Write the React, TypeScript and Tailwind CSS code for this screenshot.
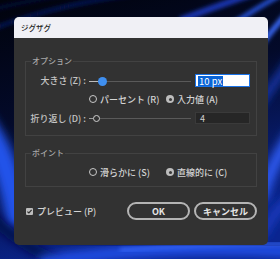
import React from "react";

function Wallpaper() {
  return (
    <svg className="absolute inset-0" width="280" height="259" viewBox="0 0 280 259">
      <defs>
        <filter id="b2" x="-20%" y="-20%" width="140%" height="140%">
          <feGaussianBlur stdDeviation="2" />
        </filter>
        <filter id="b4" x="-20%" y="-20%" width="140%" height="140%">
          <feGaussianBlur stdDeviation="5" />
        </filter>
        <linearGradient id="lg" x1="0" y1="0" x2="0.3" y2="1">
          <stop offset="0" stopColor="#01030c" />
          <stop offset="0.45" stopColor="#030a2a" />
          <stop offset="1" stopColor="#0a2590" />
        </linearGradient>
      </defs>
      <rect width="280" height="259" fill="url(#lg)" />
      <path d="M-10 30 C 40 10, 90 0, 160 -10" stroke="#0d1d6a" strokeWidth="3" fill="none" filter="url(#b2)" />
      <path d="M-10 10 C 30 0, 60 -5, 100 -12" stroke="#0b1856" strokeWidth="2" fill="none" filter="url(#b2)" />
      <path d="M180 20 C 220 5, 250 -5, 290 -20" stroke="#1c37b8" strokeWidth="6" fill="none" filter="url(#b2)" />
      <path d="M230 25 C 255 10, 270 0, 290 -10" stroke="#2b5cf0" strokeWidth="4" fill="none" filter="url(#b2)" />
      <path d="M250 60 C 265 40, 275 25, 295 5" stroke="#3a6cff" strokeWidth="5" fill="none" filter="url(#b2)" />
      <path d="M255 110 C 270 90, 280 75, 295 55" stroke="#1f44d0" strokeWidth="6" fill="none" filter="url(#b4)" />
      <path d="M260 200 C 270 170, 280 150, 295 130" stroke="#2e5cf4" strokeWidth="12" fill="none" filter="url(#b4)" />
      <path d="M262 235 C 272 215, 282 205, 295 195" stroke="#1a3cc4" strokeWidth="8" fill="none" filter="url(#b4)" />
      <path d="M-20 120 C 0 145, 10 175, 20 225" stroke="#2453ea" strokeWidth="24" fill="none" filter="url(#b4)" />
      <path d="M-10 215 C 5 230, 20 245, 60 262" stroke="#06114a" strokeWidth="10" fill="none" filter="url(#b4)" />
      <path d="M40 262 C 120 250, 200 246, 300 252" stroke="#2450e8" strokeWidth="12" fill="none" filter="url(#b4)" />
      <path d="M120 250 C 180 246, 240 244, 300 244" stroke="#3b6cff" strokeWidth="3" fill="none" filter="url(#b2)" />
    </svg>
  );
}

function Radio({ checked }: { checked?: boolean }) {
  return checked ? (
    <span className="flex h-[8px] w-[8px] shrink-0 items-center justify-center rounded-full bg-[#bdbdbd]">
      <span className="h-[3px] w-[3px] rounded-full bg-[#3a3a3a]" />
    </span>
  ) : (
    <span className="h-[8px] w-[8px] shrink-0 rounded-full border border-[#c8c8c8]" />
  );
}

function RadioRow({ a, b }: { a: string; b: string }) {
  return (
    <div className="flex items-center pl-[63px] text-[9px] font-medium leading-none text-[#d4d4d4]">
      <div className="flex w-[77px] items-center gap-[3px]">
        <Radio />
        <span>{a}</span>
      </div>
      <div className="flex items-center gap-[3px]">
        <Radio checked />
        <span>{b}</span>
      </div>
    </div>
  );
}

export default function App() {
  return (
    <div className="relative h-[259px] w-[280px] overflow-hidden pl-[14px] pt-[17px] font-['Noto_Sans_CJK_JP',sans-serif]">
      <Wallpaper />
      <div className="relative flex h-[228px] w-[254px] flex-col overflow-hidden rounded-[5px] bg-[#323232]">
        <div className="flex h-[21px] items-center bg-[#f0f0f5] pl-[7px] text-[7.5px] font-medium leading-none text-[#222]">
          ジグザグ
        </div>
        <div className="flex flex-col px-[11px] pt-[18px]">
          <fieldset className="h-[80px] border border-[#424242] px-0">
            <legend className="ml-[5px] px-[1px] text-[8px] font-medium leading-[10px] text-[#a8a8a8]">オプション</legend>
            <div className="flex flex-col pt-[8px]">
              <div className="flex h-[13px] items-center">
                <span className="w-[60px] text-right text-[9px] font-medium leading-none text-[#c4c4c4]">大きさ (Z) :</span>
                <div className="relative ml-[2px] h-[10px] w-[104px]">
                  <div className="absolute left-[1px] right-[1px] top-[5px] h-px bg-[#5a5a5a]" />
                  <div className="absolute left-[1px] top-[5px] h-px w-[10px] bg-[#bdbdbd]" />
                  <div className="absolute left-[10px] top-[1px] h-[9px] w-[9px] rounded-full bg-[#3f8ff0]" />
                </div>
                <div className="ml-[3px] flex h-[13px] w-[55px] items-center border border-[#1a73e8] bg-white pl-[2px]">
                  <span className="bg-[#0a64d6] px-[1px] text-[9.5px] leading-[10px] text-white">10 px</span>
                </div>
              </div>
              <div className="mt-[6px] flex h-[12px] items-center">
                <RadioRow a="パーセント (R)" b="入力値 (A)" />
              </div>
              <div className="mt-[7px] flex h-[12px] items-center">
                <span className="w-[60px] text-right text-[9px] font-medium leading-none text-[#c4c4c4]">折り返し (D) :</span>
                <div className="relative ml-[2px] h-[10px] w-[104px]">
                  <div className="absolute left-[1px] right-[1px] top-[5px] h-px bg-[#5a5a5a]" />
                  <div className="absolute left-[1px] top-[5px] h-px w-[4px] bg-[#9a9a9a]" />
                  <div className="absolute left-[5px] top-[2px] h-[7px] w-[7px] rounded-full border-[1.5px] border-[#cfcfcf] bg-[#323232]" />
                </div>
                <div className="ml-[3px] flex h-[12px] w-[55px] items-center border border-[#3a3a3a] bg-[#262626] pl-[4px] text-[9px] leading-none text-[#cfcfcf]">
                  4
                </div>
              </div>
            </div>
          </fieldset>
          <fieldset className="mt-[12px] h-[39px] border border-[#424242] px-0">
            <legend className="ml-[5px] px-[1px] text-[8px] font-medium leading-[10px] text-[#a8a8a8]">ポイント</legend>
            <div className="mt-[9px] flex h-[10px] items-center">
              <RadioRow a="滑らかに (S)" b="直線的に (C)" />
            </div>
          </fieldset>
          <div className="mt-[15px] flex h-[18px] items-center">
            <span className="ml-[1px] flex h-[7px] w-[7px] items-center justify-center rounded-[1px] bg-[#bdbdbd]">
              <svg width="7" height="7" viewBox="0 0 7 7">
                <path d="M1.4 3.6 L2.9 5 L5.6 1.9" stroke="#2e2e2e" strokeWidth="1.2" fill="none" />
              </svg>
            </span>
            <span className="ml-[4px] text-[9px] font-medium leading-none text-[#d4d4d4]">プレビュー (P)</span>
            <div className="ml-auto flex gap-[4px]">
              <button className="flex h-[18px] w-[63px] items-center justify-center rounded-full border-2 border-[#b4b4b4] text-[9px] font-semibold leading-none text-[#e6e6e6]">
                OK
              </button>
              <button className="flex h-[18px] w-[63px] items-center justify-center rounded-full border-2 border-[#b4b4b4] text-[9px] font-semibold leading-none text-[#e6e6e6]">
                キャンセル
              </button>
            </div>
          </div>
        </div>
      </div>
    </div>
  );
}
